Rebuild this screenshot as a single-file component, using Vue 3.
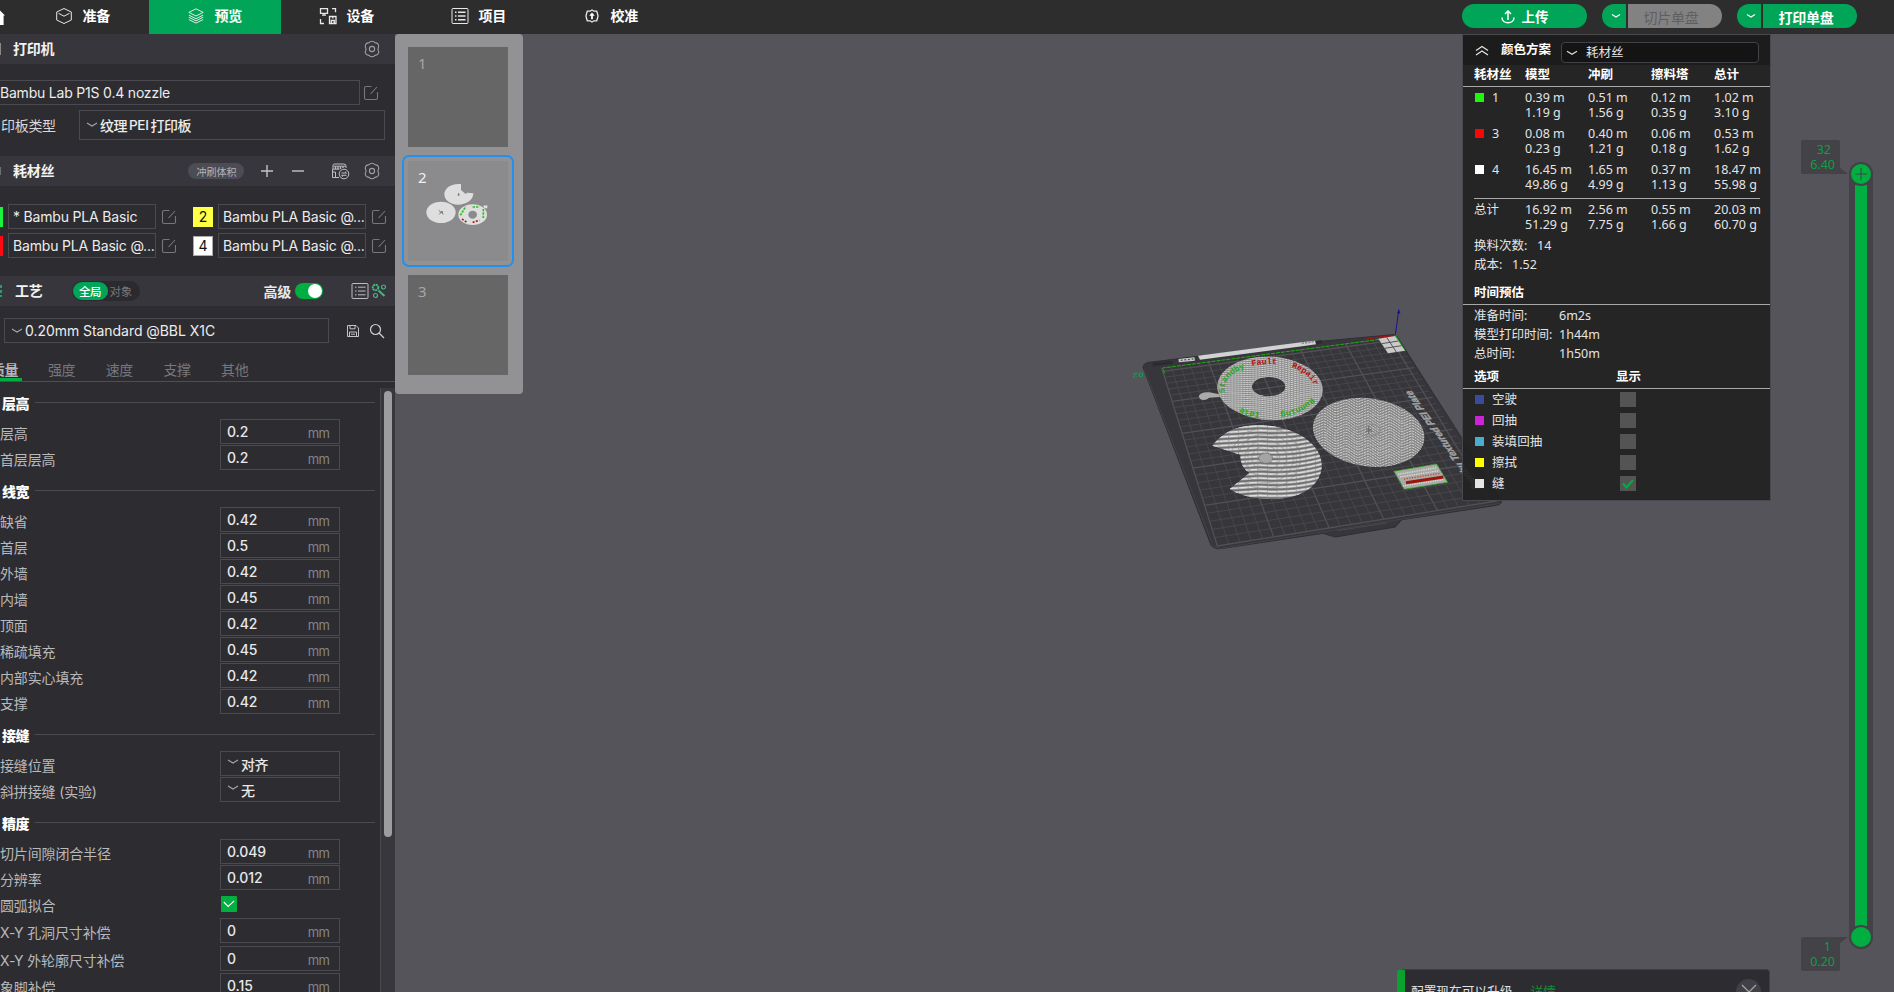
<script setup>
const tabs = [
  { name: '准备', icon: 'cube' },
  { name: '预览', icon: 'layers', active: true },
  { name: '设备', icon: 'device' },
  { name: '项目', icon: 'list' },
  { name: '校准', icon: 'calib' },
]

const filaments = [
  { id: '', name: '* Bambu PLA Basic', cls: 'green' },
  { id: '2', name: 'Bambu PLA Basic @...', cls: 'yellow' },
  { id: '', name: 'Bambu PLA Basic @...', cls: 'red' },
  { id: '4', name: 'Bambu PLA Basic @...', cls: 'white' },
]

const sections = [
  { title: '层高', rows: [
    { label: '层高', value: '0.2' },
    { label: '首层层高', value: '0.2' },
  ] },
  { title: '线宽', rows: [
    { label: '缺省', value: '0.42' },
    { label: '首层', value: '0.5' },
    { label: '外墙', value: '0.42' },
    { label: '内墙', value: '0.45' },
    { label: '顶面', value: '0.42' },
    { label: '稀疏填充', value: '0.45' },
    { label: '内部实心填充', value: '0.42' },
    { label: '支撑', value: '0.42' },
  ] },
  { title: '接缝', rows: [
    { label: '接缝位置', select: '对齐' },
    { label: '斜拼接缝 (实验)', select: '无' },
  ] },
  { title: '精度', rows: [
    { label: '切片间隙闭合半径', value: '0.049' },
    { label: '分辨率', value: '0.012' },
    { label: '圆弧拟合', check: true },
    { label: 'X-Y 孔洞尺寸补偿', value: '0', tall: true },
    { label: 'X-Y 外轮廓尺寸补偿', value: '0', mid: true },
    { label: '象脚补偿', value: '0.15' },
  ] },
]

const usage = [
  { id: '1', cls: 'lime', cells: [['0.39 m', '1.19 g'], ['0.51 m', '1.56 g'], ['0.12 m', '0.35 g'], ['1.02 m', '3.10 g']] },
  { id: '3', cls: 'pure-red', cells: [['0.08 m', '0.23 g'], ['0.40 m', '1.21 g'], ['0.06 m', '0.18 g'], ['0.53 m', '1.62 g']] },
  { id: '4', cls: 'pure-white', cells: [['16.45 m', '49.86 g'], ['1.65 m', '4.99 g'], ['0.37 m', '1.13 g'], ['18.47 m', '55.98 g']] },
]
const total = [['16.92 m', '51.29 g'], ['2.56 m', '7.75 g'], ['0.55 m', '1.66 g'], ['20.03 m', '60.70 g']]
const times = [['准备时间:', '6m2s'], ['模型打印时间:', '1h44m'], ['总时间:', '1h50m']]
const options = [
  { name: '空驶', cls: 'travel' },
  { name: '回抽', cls: 'retract' },
  { name: '装填回抽', cls: 'unretract' },
  { name: '擦拭', cls: 'wipe' },
  { name: '缝', cls: 'seam', on: true },
]

// Perspective mapping of the unit square onto the build plate.
const quad = [[185, 234], [885, 140], [1190, 633], [352, 768]]
function project(u, v) {
  const [[x0, y0], [x1, y1], [x2, y2], [x3, y3]] = quad
  const dx1 = x1 - x2, dx2 = x3 - x2, dx3 = x0 - x1 + x2 - x3
  const dy1 = y1 - y2, dy2 = y3 - y2, dy3 = y0 - y1 + y2 - y3
  const d = dx1 * dy2 - dx2 * dy1
  const g = (dx3 * dy2 - dx2 * dy3) / d
  const h = (dx1 * dy3 - dx3 * dy1) / d
  const w = g * u + h * v + 1
  return [
    ((x1 - x0 + g * x1) * u + (x3 - x0 + h * x3) * v + x0) / w,
    ((y1 - y0 + g * y1) * u + (y3 - y0 + h * y3) * v + y0) / w,
  ]
}
function gridPath(bold) {
  let d = ''
  for (let i = 0; i <= 25; i++) {
    if ((i % 5 === 0) !== bold) continue
    const t = i / 25.6
    d += `M${project(t, 0)}L${project(t, 1)}M${project(0, 1 - t)}L${project(1, 1 - t)}`
  }
  return d
}
const fine = gridPath(false)
const bold = gridPath(true)

// Extrusion lines of the three printed discs.
function waves(x0, x1, y0, y1, step, fn) {
  let d = ''
  for (let y = y0; y < y1; y += step) {
    for (let x = x0; x <= x1; x += 8) d += (x === x0 ? 'M' : 'L') + x + ',' + (y + fn(x)).toFixed(1)
  }
  return d
}
const donutLines = waves(340, 680, 130, 430, 6, x => (x - 500) * 0.12 + Math.sin(x / 45) * 4)
const discLines = waves(630, 990, 250, 640, 8, x => (x - 800) * 0.14 + Math.abs(((x - 640) % 66) - 33) * 0.55)
const biteLines = waves(330, 680, 330, 760, 13, x => (x < 480 ? (x - 480) * -0.06 : (x - 480) * 0.08 - (x - 480) * (x - 480) * 0.0009))
const rings = [26, 52, 78, 104, 130]
</script>

<template>
  <div class="app">
    <header class="topbar">
      <svg class="home" viewBox="0 0 6 18" width="6" height="18"><path d="M0 1.500 5 6.500H3.600V16H0z" fill="#fff" /></svg>
      <nav class="tabs">
        <div v-for="t in tabs" :key="t.name" class="tab" :class="{ active: t.active }">
          <span class="tab-icon">
            <svg v-if="t.icon === 'cube'" width="18" height="18" viewBox="0 0 18 18" class="line"><path d="M9 1.500 16.300 5v8L9 16.500 1.700 13V5zM3.500 6.300 9 9.200l5.500-2.900" /></svg>
            <svg v-else-if="t.icon === 'layers'" width="18" height="18" viewBox="0 0 18 18" class="line"><path d="m9 1.800 7.200 3.600L9 9 1.800 5.400zM1.800 8.100 9 11.700l7.200-3.600M1.800 10.200 9 13.800l7.200-3.600M1.800 12.500 9 16.100l7.200-3.600" /></svg>
            <svg v-else-if="t.icon === 'device'" width="18" height="18" viewBox="0 0 18 18" class="line thick"><path d="M1.500 1.700h7v4.600h-7zM5 6.300v1.800M3 8.100h4M13 1.700h3.500v3.500M1.500 12v4.500H5M10.500 9.500h6.500v7h-6.500zM12.300 16v-2.500h3V16M13.800 9.500v2" /></svg>
            <svg v-else-if="t.icon === 'list'" width="18" height="18" viewBox="0 0 18 18" class="line"><rect x="1" y="1.500" width="16" height="15" rx="1" /><path d="M4 5.200h1.500M7 5.200h7.500M4 9h1.500M7 9h7.500M4 12.800h1.500M7 12.800h7.500" stroke-width="1.400" /></svg>
            <svg v-else width="18" height="18" viewBox="0 0 18 18" class="line thick"><path d="M7 4.200 9 3l2 1.200h2.700l.8 2.500L15 9l-.5 2.300-.8 2.500H11L9 15l-2-1.200H4.300l-.8-2.500L3 9l.5-2.300.8-2.500z" /><path d="m9 5.600 2.800 3.200h-1.900v3.400H8.100V8.800H6.200z" fill="#fff" stroke="none" /></svg>
          </span>
          <span class="tab-name">{{ t.name }}</span>
        </div>
      </nav>
      <div class="actions">
        <div class="btn upload">
          <svg width="14" height="14" viewBox="0 0 14 14"><path d="M7 10V1.500M4 4l3-3 3 3M1 7.500c0 7 12 7 12 0" fill="none" stroke="#fff" stroke-width="1.500" /></svg>
          <span>上传</span>
        </div>
        <div class="split">
          <div class="btn drop"><svg width="10" height="6" viewBox="0 0 10 6"><path d="M1 1.500 5 4l4-2.500" fill="none" stroke="#fff" stroke-width="1.100" /></svg></div>
          <div class="btn main disabled">切片单盘</div>
        </div>
        <div class="split">
          <div class="btn drop"><svg width="10" height="6" viewBox="0 0 10 6"><path d="M1 1.500 5 4l4-2.500" fill="none" stroke="#fff" stroke-width="1.100" /></svg></div>
          <div class="btn main">打印单盘</div>
        </div>
      </div>
    </header>

    <div class="body">
      <aside class="sidebar">
        <div class="bar">
          <i class="sliver"></i>
          <b class="bar-title">打印机</b>
          <svg class="gear" width="18" height="18" viewBox="0 0 18 18"><path d="M6.300 2.600q.8-1.400 2.700-1.400t2.700 1.400l1.300.3q1.600.2 2.300 1.600.9 1.400.1 2.700L15 9l.4 1.800q.8 1.300-.1 2.700-.7 1.400-2.300 1.600l-1.300.3q-.8 1.400-2.700 1.400t-2.700-1.400L5 15.100q-1.600-.2-2.300-1.600-.9-1.400-.1-2.700L3 9l-.4-1.800q-.8-1.300.1-2.700Q3.400 3.100 5 2.900z" /><circle cx="9" cy="9" r="2.600" /></svg>
        </div>
        <div class="printer">
          <div class="printer-row">
            <div class="field printer-name">Bambu Lab P1S 0.4 nozzle</div>
            <svg class="edit" width="16" height="16" viewBox="0 0 16 16"><path d="M8.500 1.500H3a1.500 1.500 0 0 0-1.500 1.500v10A1.500 1.500 0 0 0 3 14.500h10a1.500 1.500 0 0 0 1.500-1.500V7M7.500 9 14 2" /></svg>
          </div>
          <div class="plate-row">
            <span class="plate-label">印板类型</span>
            <div class="field plate-type"><svg class="chev" width="12" height="6" viewBox="0 0 12 6"><path d="m1 1 5 3 5-3" /></svg>纹理<span class="pei">PEI</span>打印板</div>
          </div>
        </div>

        <div class="bar">
          <i class="sliver round"></i>
          <b class="bar-title">耗材丝</b>
          <span class="pill">冲刷体积</span>
          <svg class="plus" width="12" height="12" viewBox="0 0 12 12"><path d="M6 0v12M0 6h12" /></svg>
          <svg class="minus" width="12" height="12" viewBox="0 0 12 12"><path d="M0 6h12" /></svg>
          <svg class="ams" width="19" height="17" viewBox="0 0 19 17"><path d="M2 6V2.500Q2 1 3.500 1h9Q15 1 15 3v2M2.500 3.200h12" /><path d="M4.500 3.500V6M7 3.500V6M9.500 3.500V6M12 3.500V5" stroke-width="1.300" /><path d="M8.500 6.200H1.500v8.300H8M4.500 9v5.500M2 9h2.500" /><circle cx="13" cy="11" r="4.800" /><path d="M10.500 10h5l-1.400-1.300M15.500 12.300h-5l1.400 1.300" /></svg>
          <svg class="gear" width="18" height="18" viewBox="0 0 18 18"><path d="M6.300 2.600q.8-1.400 2.700-1.400t2.700 1.400l1.300.3q1.600.2 2.300 1.600.9 1.400.1 2.700L15 9l.4 1.800q.8 1.300-.1 2.700-.7 1.400-2.300 1.600l-1.300.3q-.8 1.400-2.700 1.400t-2.700-1.400L5 15.100q-1.600-.2-2.300-1.600-.9-1.400-.1-2.700L3 9l-.4-1.800q-.8-1.300.1-2.700Q3.400 3.100 5 2.900z" /><circle cx="9" cy="9" r="2.600" /></svg>
        </div>
        <div class="filaments">
          <div v-for="(f, i) in filaments" :key="i" class="filament">
            <span class="chip" :class="f.cls">{{ f.id }}</span>
            <div class="field filament-name">{{ f.name }}</div>
            <svg class="edit" width="16" height="16" viewBox="0 0 16 16"><path d="M8.500 1.500H3a1.500 1.500 0 0 0-1.500 1.500v10A1.500 1.500 0 0 0 3 14.500h10a1.500 1.500 0 0 0 1.500-1.500V7M7.500 9 14 2" /></svg>
          </div>
        </div>

        <div class="bar process">
          <i class="sliver teal"></i>
          <b class="bar-title">工艺</b>
          <div class="scope"><span class="on">全局</span><span class="off">对象</span></div>
          <b class="adv">高级</b>
          <span class="toggle"><i></i></span>
          <svg class="table" width="18" height="18" viewBox="0 0 18 18"><rect x="1" y="1.500" width="16" height="15" rx="1" /><path d="M4 5.200h1.500M7 5.200h7.500M4 9h1.500M7 9h7.500M4 12.800h1.500M7 12.800h7.500" /></svg>
          <svg class="tools" width="16" height="16" viewBox="0 0 16 16"><circle cx="4.500" cy="4.500" r="2.800" stroke-dasharray="2 .6" stroke-width="2" /><circle cx="12.500" cy="4" r="2" /><circle cx="4.500" cy="12.500" r="2" /><path d="m7.500 7.500 6 5.500" stroke-width="2" /></svg>
        </div>
        <div class="preset-row">
          <div class="field preset"><svg class="chev" width="12" height="6" viewBox="0 0 12 6"><path d="m1 1 5 3 5-3" /></svg>0.20mm Standard @BBL X1C</div>
          <svg class="save" width="14" height="14" viewBox="0 0 14 14"><path d="M1.500 1.500h8.500l2.500 2.500v8.500h-11zM4 1.500v3.300h5V1.500M3.500 12.500V8h7v4.500M5 10.200h4" /></svg>
          <svg class="search" width="16" height="16" viewBox="0 0 16 16"><circle cx="6.500" cy="6.500" r="5" /><path d="m10 10 5 5" /></svg>
        </div>
        <div class="subtabs">
          <b>质量</b><span>强度</span><span>速度</span><span>支撑</span><span>其他</span>
        </div>

        <div class="settings">
          <div class="settings-list">
            <section v-for="s in sections" :key="s.title">
              <div class="sec-title"><b>{{ s.title }}</b><i></i></div>
              <div v-for="r in s.rows" :key="r.label" class="row" :class="{ tall: r.tall, mid: r.mid }">
                <span class="row-label">{{ r.label }}</span>
                <span v-if="r.check" class="checked"><svg width="12" height="8" viewBox="0 0 12 8"><path d="m.8 2 4.400 4.500L11.200.8" /></svg></span>
                <div v-else-if="r.select" class="input select"><svg class="chev" width="12" height="6" viewBox="0 0 12 6"><path d="m1 1 5 3 5-3" /></svg>{{ r.select }}</div>
                <div v-else class="input"><span>{{ r.value }}</span><em>mm</em></div>
              </div>
            </section>
          </div>
          <div class="scroll"><i></i></div>
        </div>
      </aside>

      <main class="viewport">
        <svg class="scene" width="420" height="270" viewBox="0 0 1260 810">
          <defs>
            <clipPath id="c-donut"><path clip-rule="evenodd" d="M352 293a158 95 3 1 0 316 4a158 95 3 1 0-316-4zM456 290a50 29 0 1 0 100 0a50 29 0 1 0-100 0z" /></clipPath>
            <clipPath id="c-disc"><ellipse cx="806" cy="427" rx="168" ry="102" transform="rotate(8 806 427)" /></clipPath>
            <clipPath id="c-bite"><path d="M337 467C378 415 430 404 485 405C600 412 668 470 665 530C660 600 580 632 500 627C450 624 410 612 389 597L448 549Q420 530 421 494z" /></clipPath>
            <path id="ring" d="M375 308A133 73 0 0 1 640 284A133 73 0 0 1 375 308" />
          </defs>
          <path d="M129 232Q130 219 148 217L650 155L880 134Q888 134 892 141L1204 630Q1207 642 1190 646L906 689L886 711L706 741L668 730L362 776Q340 777 333 765z" fill="#37363b" stroke="#2f2e33" stroke-width="3" />
          <path d="M133 238 340 770l22 5L1200 640" fill="none" stroke="#4a4a4e" stroke-width="2" />
          <path d="M712 722 860 699" stroke="#4a4a4e" stroke-width="3" />
          <path :d="fine" class="grid-fine" />
          <path :d="bold" class="grid-bold" />
          <path d="M194 250 188 234 840 148" fill="none" stroke="#1fae12" stroke-width="3" stroke-dasharray="12 3" />
          <path d="m800 146 86-10" stroke="#b00f12" stroke-width="4" />
          <path d="m886 136 29 47" stroke="#12a81d" stroke-width="4" />
          <path d="M886 134 896 64" stroke="#15158c" stroke-width="3" />
          <path d="m891 70 6-14 4 15z" fill="#15158c" />
          <path d="m294 197 316-41 35-4 3 11-36 5-312 41z" fill="#d0d2d3" />
          <path d="m605 160 38-5" stroke="#8d8f91" stroke-width="5" stroke-dasharray="7 3" />
          <path d="m236 212 48-5" stroke="#c9cbcc" stroke-width="10" />
          <path d="m242 211 38-4" stroke="#55555a" stroke-width="4" stroke-dasharray="6 5" />
          <path d="m158 224 60-7M648 158l18-3" stroke="#2c2b30" stroke-width="10" />
          <path d="m835 146 50-8 30 44-51 8z" fill="#c9cac9" />
          <path d="m845 161 50-8M854 175l51-8M860 142l29 44" stroke="#55555a" stroke-width="3" />
          <text class="axis" transform="matrix(-1 .08 0 -.72 131 246)">02</text>
          <text class="plate-text" transform="matrix(-.47 -.665 .9 -.08 1143 598)">Bambu Textured PEI Plate</text>

          <path d="M296 318q8-14 32-11l30 6 2 8-32 2q-14 12-28 4z" fill="#aaaaa9" />
          <g clip-path="url(#c-donut)">
            <rect x="340" y="180" width="340" height="220" fill="#8b8b8b" />
            <path :d="donutLines" class="extrude dots" />
            <path d="M350 335Q430 350 660 385M360 300Q440 315 460 330T560 330L670 300" class="soft" />
            <ellipse cx="508" cy="293" rx="56" ry="34" class="soft" />
          </g>
          <g class="ring-text">
            <text class="g"><textPath href="#ring" startOffset="0%">Standby</textPath></text>
            <text class="r"><textPath href="#ring" startOffset="19%">Fault</textPath></text>
            <text class="r"><textPath href="#ring" startOffset="37%">Repair</textPath></text>
            <text class="g"><textPath href="#ring" startOffset="56%">Running</textPath></text>
            <text class="g"><textPath href="#ring" startOffset="81%">Idle</textPath></text>
          </g>

          <g clip-path="url(#c-disc)">
            <rect x="620" y="310" width="370" height="240" fill="#858585" />
            <path :d="discLines" class="extrude dots" />
            <ellipse v-for="r in rings" :key="r" cx="808" cy="440" :rx="r" :ry="r * 0.5" class="soft" />
            <ellipse cx="808" cy="420" rx="32" ry="18" fill="none" stroke="#8a8a8a" stroke-width="5" stroke-dasharray="5 4" />
            <path d="m798 414 18 12m-20 0 20-10M806 408v24" stroke="#6b6b6b" stroke-width="3" />
          </g>
          <g clip-path="url(#c-bite)">
            <rect x="330" y="400" width="340" height="235" fill="#6f6f6f" />
            <path :d="biteLines" class="extrude mid" />
            <path :d="biteLines" class="extrude bright" />
            <ellipse v-for="r in rings" :key="r" cx="497" cy="505" :rx="r * 0.8" :ry="r * 0.7" class="soft dark" />
            <ellipse cx="497" cy="505" rx="20" ry="15" fill="#a4a4a4" stroke="#6f6f6f" stroke-width="3" stroke-dasharray="4 4" />
          </g>

          <path d="m882 544 128-22 33 55-130 21z" fill="#a9a9a6" stroke="#38a22a" stroke-width="3" stroke-dasharray="9 3" />
          <path d="m894 553 117-20M900 561l117-19M908 588l122-19" stroke="#dadad8" stroke-width="4" stroke-dasharray="4 3" />
          <path d="m912 567 108-17" stroke="#c04a42" stroke-width="4" stroke-dasharray="4 4" />
          <path d="m918 578 112-17" stroke="#9c140a" stroke-width="9" />
        </svg>

        <div class="plates">
          <div class="thumb">1</div>
          <div class="thumb selected">2
            <svg width="62" height="44" viewBox="0 0 186 132">
              <path d="M105 3C70 1 55 18 55 34c0 18 18 32 44 31 24-1 43-15 43-34l-18-2-5 4-14-12z" fill="#dedede" />
              <ellipse cx="45" cy="88" rx="44" ry="32" fill="#dedede" />
              <path fill-rule="evenodd" d="M97 95a43 31 0 1 0 86 0a43 31 0 1 0-86 0zM127 95a13 12 0 1 1 26 0a13 12 0 1 1-26 0z" fill="#dedede" />
              <path d="m172 70 10-1v5h-8" stroke="#dedede" stroke-width="4" fill="none" />
              <path d="M98 30v8m-3-2h6M38 82l14 12m-12 0 8-10 2 8" stroke="#777" stroke-width="3" fill="none" />
              <path d="m103 97 16-26M172 78v28M140 72h20" stroke="#27c41e" stroke-width="5" stroke-dasharray="7 3" />
              <path d="m108 108 15 10M140 118l20-6" stroke="#b01c1c" stroke-width="5" stroke-dasharray="6 4" />
            </svg>
          </div>
          <div class="thumb">3</div>
        </div>

        <section class="legend">
          <div class="legend-head">
            <svg width="14" height="11" viewBox="0 0 14 11"><path d="m1 5.500 6-4 6 4M1 10l6-4 6 4" fill="none" stroke="#e6e6e6" stroke-width="1.200" /></svg>
            <b>颜色方案</b>
            <div class="combo"><svg width="12" height="6" viewBox="0 0 12 6"><path d="m1 1.200 5 3 5-3" fill="none" stroke="#ddd" stroke-width="1.300" /></svg>耗材丝</div>
          </div>
          <div class="cols head"><b>耗材丝</b><b>模型</b><b>冲刷</b><b>擦料塔</b><b>总计</b></div>
          <div v-for="u in usage" :key="u.id" class="cols data">
            <div class="key"><i :class="u.cls"></i>{{ u.id }}</div>
            <div v-for="(c, i) in u.cells" :key="i">{{ c[0] }}<br />{{ c[1] }}</div>
          </div>
          <div class="cols total">
            <div>总计</div>
            <div v-for="(c, i) in total" :key="i">{{ c[0] }}<br />{{ c[1] }}</div>
          </div>
          <div class="stat">换料次数:&nbsp;&nbsp; 14</div>
          <div class="stat">成本:&nbsp;&nbsp; 1.52</div>
          <div class="est-head"><b>时间预估</b></div>
          <div class="times">
            <div v-for="t in times" :key="t[0]"><span>{{ t[0] }}</span><span>{{ t[1] }}</span></div>
          </div>
          <div class="opt-head"><b>选项</b><b>显示</b></div>
          <div class="options">
            <div v-for="o in options" :key="o.name" class="option">
              <i :class="o.cls"></i><span>{{ o.name }}</span>
              <div class="box"><svg v-if="o.on" width="12" height="10" viewBox="0 0 12 10"><path d="m1 4.500 3.500 4L11 1" fill="none" stroke="#00ae42" stroke-width="2" /></svg></div>
            </div>
          </div>
        </section>

        <div class="slider">
          <div class="fill"></div>
          <div class="knob top"><svg width="12" height="12" viewBox="0 0 12 12"><path d="M6 0v12M0 6h12" stroke="#3b4a40" stroke-width="1" /></svg></div>
          <div class="knob bottom"></div>
          <div class="tip tip-top"><span>32</span><span>6.40</span></div>
          <div class="tip tip-bottom"><span>1</span><span>0.20</span></div>
        </div>

        <div class="notice">
          <span>配置现在可以升级</span><a>详情</a>
          <div class="close"><svg width="16" height="16" viewBox="0 0 16 16"><path d="m1 1 14 14M15 1 1 15" stroke="#aaa99f" stroke-width="1.200" /></svg></div>
        </div>
      </main>
    </div>
  </div>
</template>

<style>
body { background: #55545a; overflow: hidden; }
</style>

<style scoped>
* { box-sizing: border-box; }
.app { width: 1894px; height: 992px; overflow: hidden; display: flex; flex-direction: column; color: #e8e8e8; font-family: Inter, "Noto Sans CJK SC", sans-serif; font-size: 14px; }
svg { flex: none; display: block; }
i, em { font-style: normal; }

.topbar { height: 34px; flex: none; background: #2d2d2e; display: flex; color: #fff; }
.home { margin-top: 9px; }
.tabs { display: flex; margin-left: 11px; }
.tab { width: 132px; height: 34px; display: flex; align-items: center; padding-left: 38px; font-weight: 700; padding-bottom: 2px; }
.tab.active { background: #00a557; }
.tab-icon { width: 27.5px; }
.tab-name { letter-spacing: -.3px; line-height: 20px; }
.line { fill: none; stroke: #e8e8e8; stroke-width: 1; }
.line.thick { stroke-width: 1.3; }
.actions { display: flex; margin-left: auto; padding: 4px 37px 0 0; gap: 15px; }
.btn { height: 24px; background: #00a557; display: flex; align-items: center; justify-content: center; font-weight: 500; font-size: 14px; line-height: 20px; }
.upload { width: 125px; border-radius: 12px; gap: 7px; font-weight: 700; font-size: 13.5px; padding-top: 1px; }
.split { display: flex; gap: 2px; }
.drop { width: 24px; border-radius: 12px 0 0 12px; padding-left: 4px; }
.main { width: 94px; border-radius: 0 12px 12px 0; padding: 3px 8px 0 0; font-weight: 700; letter-spacing: -.2px; }
.main.disabled { background: #828283; color: #5f5f60; font-weight: 400; }

.body { display: flex; flex: 1; min-height: 0; }
.sidebar { width: 395px; flex: none; background: #2d2c31; display: flex; flex-direction: column; overflow: hidden; }
.bar { height: 30px; flex: none; background: #37363c; display: flex; align-items: center; padding-right: 14px; }
.bar-title { font-size: 14px; letter-spacing: -.2px; color: #f2f2f2; line-height: 20px; }
.sliver { width: 1px; height: 12px; background: #8a8a80; margin-right: 12px; }
.sliver.round { background: #6e6e72; height: 8px; }
.sliver.teal { width: 2px; background: repeating-linear-gradient(#2b9b68 0 3px, #37363c 3px 5px); margin-right: 13px; }
.gear { fill: none; stroke: #a0a0a4; stroke-width: 1.1; }
.bar > .gear { margin-left: auto; }
.field { border: 1px solid #4b4a51; height: 25px; display: flex; align-items: center; white-space: nowrap; overflow: hidden; color: #ececec; }
.edit { fill: none; stroke: #77777b; stroke-width: 1.1; }
.printer { height: 92px; flex: none; padding-top: 16px; }
.printer-row { display: flex; align-items: center; gap: 3px; }
.printer-name { width: 361px; margin-left: -1px; letter-spacing: -.2px; padding-bottom: 1px; }
.plate-row { display: flex; align-items: center; margin-top: 5px; }
.plate-label { width: 79px; padding: 0 0 1px 1px; letter-spacing: -.3px; color: #d8d8d8; }
.plate-type { width: 306px; height: 30px; padding: 0 0 0 6px; letter-spacing: -.5px; font-weight: 500; }
.pei { font-size: 13.5px; padding: 0 2px; letter-spacing: -.3px; font-weight: 500; }
.chev { fill: none; stroke: #a5a5a8; stroke-width: 1.1; margin-right: 2px; }
.pill { width: 56px; height: 16px; border-radius: 8px; background: #4c4c55; font-size: 10px; color: #b3b3b6; line-height: 18px; text-align: center; margin: 0 17px 0 134px; }
.plus, .minus { stroke: #c4c4c6; stroke-width: 1.4; margin-right: 19px; }
.minus { margin-right: 27px; }
.ams { fill: none; stroke: #c0c0c2; stroke-width: 1; }
.filaments { height: 90px; flex: none; padding-top: 18px; display: grid; grid-template-columns: 193px 202px; grid-auto-rows: 25px; row-gap: 4px; }
.filament { display: flex; align-items: center; }
.chip { width: 20px; height: 20px; margin-right: 5px; color: #111; text-align: center; line-height: 20px; flex: none; }
.filament:nth-child(odd) .chip { width: 3px; }
.chip.green { background: #1af43e; }
.chip.yellow { background: #ffff45; }
.chip.red { background: #fb0a14; }
.chip.white { background: #fff; border: 1px solid #aaa; line-height: 18px; }
.filament-name { width: 148px; padding: 0 0 1px 4px; margin-right: 5px; letter-spacing: -.18px; }
.scope { display: flex; width: 68px; height: 20px; border-radius: 10px; background: #2b2a2f; margin-left: 29px; font-size: 11.500px; line-height: 21px; padding: 1px 0 0 1px; }
.scope .on { width: 35px; height: 18px; border-radius: 9px; background: #00a557; color: #fff; text-align: center; font-weight: 500; letter-spacing: -.3px; }
.scope .off { color: #77777b; padding-left: 2px; letter-spacing: -.4px; }
.adv { margin-left: 124px; letter-spacing: -.3px; }
.toggle { width: 28px; height: 16px; border-radius: 8px; background: #00ae42; margin: 0 28px 0 4px; display: flex; justify-content: flex-end; padding: 1px; }
.toggle i { width: 14px; height: 14px; border-radius: 50%; background: #fff; }
.table { fill: none; stroke: #bdbdc0; stroke-width: 1; margin-right: 2px; }
.tools { fill: none; stroke: #45b581; stroke-width: 1.2; }
.process { padding-right: 0; }
.preset-row { display: flex; align-items: center; height: 49px; padding-left: 4px; flex: none; }
.preset { width: 325px; padding-left: 6px; margin-right: 17px; letter-spacing: -.05px; }
.save { fill: none; stroke: #c4c4c6; stroke-width: 1; margin-right: 9px; }
.search { fill: none; stroke: #d0d0d2; stroke-width: 1.2; }
.subtabs { height: 27px; flex: none; border-bottom: 1px solid #4f4e55; display: flex; color: #77777b; line-height: 30px; letter-spacing: -.4px; }
.subtabs > * { width: 57.7px; flex: none; height: 26px; }
.subtabs b { width: 22px; margin-right: 26px; color: #b5b5b7; border-bottom: 3px solid #00ae42; display: flex; justify-content: flex-end; white-space: nowrap; padding-right: 4px; height: 26px; }

.settings { flex: 1; min-height: 0; display: flex; justify-content: space-between; padding-top: 1px; }
.settings-list { width: 375px; height: 609px; overflow: hidden; }
.sec-title { height: 36px; display: flex; align-items: flex-start; gap: 6px; }
.sec-title b { margin: 11px 0 0 2px; line-height: 20px; color: #fff; font-weight: 900; letter-spacing: -.4px; }
.sec-title i { flex: 1; height: 1px; background: #4c4b52; margin-top: 19px; }
.row { height: 26px; display: flex; align-items: flex-start; }
.row.tall { height: 28px; margin-top: 1px; }
.row.mid { height: 27px; }
.row-label { width: 220px; line-height: 30px; color: #b9b9bb; letter-spacing: -.15px; height: 25px; white-space: nowrap; }
.input { width: 120px; height: 25px; border: 1px solid #4b4a51; padding: 0 10px 0 6px; display: flex; justify-content: space-between; line-height: 24px; font-weight: 500; letter-spacing: -.1px; }
.input em { color: #858589; font-weight: 400; line-height: 27px; font-size: 13px; letter-spacing: -.8px; }
.input.select { justify-content: flex-start; align-items: center; letter-spacing: -.4px; padding-top: 2px; }
.input.select .chev { margin-top: -5px; }
.checked { width: 16px; height: 16px; background: #00ae42; border-radius: 1px; margin: 5px 0 0 1px; display: flex; align-items: center; justify-content: center; }
.checked path { fill: none; stroke: #fff; stroke-width: 1.1; }
.scroll { width: 15px; margin-top: 5px; border-left: 1px solid #4a494e; background: #38373b; padding: 3px 0 0 3px; }
.scroll i { display: block; width: 8px; height: 446px; border-radius: 4px; background: #9d9da0; }

.viewport { flex: 1; position: relative; background: #55545a; overflow: hidden; }
.scene { position: absolute; left: 705px; top: 256px; }
.grid-fine { fill: none; stroke: #4a4a4f; stroke-width: 2.4; }
.grid-bold { fill: none; stroke: #505055; stroke-width: 4; }
.axis { font: 700 30px "Liberation Sans", sans-serif; fill: #119a4e; }
.plate-text { font: 700 36px "Liberation Sans", sans-serif; fill: #a2a3a5; stroke: #a2a3a5; stroke-width: 1.5; }
.extrude { fill: none; stroke: #d2d2d2; stroke-width: 3; }
.extrude.dots { stroke-dasharray: 7 2; }
.extrude.mid { stroke: #a8a8a8; stroke-width: 8; }
.extrude.bright { stroke: #dedede; stroke-width: 4; stroke-dasharray: 26 3; }
.soft { fill: none; stroke: #b4b4b4; stroke-width: 4; opacity: .4; }
.soft.dark { stroke: #7d7d7d; }
.ring-text text { font: 700 25px "Liberation Mono", monospace; }
.ring-text .r { fill: #b30d0d; }
.ring-text .g { fill: #21a915; }

.plates { position: absolute; left: 0; top: 0; width: 128px; height: 360px; background: #929294; border-radius: 4px; padding: 13px 13px 0; display: flex; flex-direction: column; gap: 14px; }
.thumb { height: 100px; background: #666667; color: #a5a5a7; font: 15px/20px "Noto Sans", sans-serif; padding: 6px 0 0 10px; flex: none; width: 100px; }
.thumb.selected { background: #8b8b8d; color: #f0f0f0; outline: 2px solid #2490ee; outline-offset: 4px; border-radius: 1px; }
.thumb svg { margin: -4px 0 0 8px; }

.legend { position: absolute; left: 1068px; top: 1px; width: 307px; height: 465px; background: rgba(33, 33, 33, .91); outline: 1px solid #49484e; font: 12.5px/15px "Noto Sans", "Noto Sans CJK SC", sans-serif; color: #e4e4e4; }
.legend b { color: #fff; }
.legend-head { height: 30px; background: #1c1c1c; display: flex; padding-left: 12px; }
.legend-head > svg { margin: 10px 12px 0 0; }
.legend-head b { margin: 7px 10px 0 0; }
.combo { width: 198px; height: 21px; margin-top: 7px; border: 1px solid #424148; border-radius: 4px; background: #141414; display: flex; align-items: center; gap: 8px; padding-left: 4px; }
.cols { display: grid; grid-template-columns: 51px 63px 63px 63px 60px; padding-left: 11px; white-space: nowrap; }
.cols.head { height: 22px; border-bottom: 1px solid #a8a8a8; padding-top: 2px; margin-bottom: 3px; }
.cols.data { height: 36px; }
.key { display: flex; }
.key i, .option i { width: 9px; height: 9px; margin: 3px 8px 0 1px; flex: none; }
.lime { background: #1ef70c; }
.pure-red { background: #f90505; }
.pure-white { background: #fff; }
.cols.total { margin: 0 10px 0 11px; padding: 3px 0 0; border-top: 1px solid #a8a8a8; height: 38px; }
.stat { height: 19px; line-height: 19px; padding-left: 11px; }
.est-head { height: 31px; padding: 11px 0 0 11px; border-bottom: 1px solid #a8a8a8; margin-bottom: 1px; }
.times { height: 59px; line-height: 19px; padding-left: 11px; }
.times div { display: flex; }
.times span:first-child { width: 85px; }
.opt-head { height: 24px; padding: 4px 0 0 11px; border-bottom: 1px solid #a8a8a8; display: flex; }
.opt-head b:first-child { width: 142px; }
.option { height: 21px; display: flex; padding-left: 11px; align-items: center; }
.option i { margin-top: 0; }
.option span { width: 128px; letter-spacing: .1px; }
.box { width: 16px; height: 15px; background: #545454; display: flex; align-items: center; justify-content: center; }
.travel { background: #3a4a9e; }
.retract { background: #cd22d6; }
.unretract { background: #49adcf; }
.wipe { background: #ffff00; }
.seam { background: #e6e6e6; }

.slider { position: absolute; left: 1454px; top: 128px; width: 24px; height: 787px; border-radius: 12px; background: #434247; }
.fill { margin: 23px 6px 0; height: 741px; background: #00ae42; }
.knob { position: absolute; left: 0; width: 24px; height: 24px; border-radius: 50%; background: #00ae42; border: 2px solid #434247; display: flex; align-items: center; justify-content: center; }
.knob.top { top: 0; }
.knob.bottom { bottom: 0; }
.tip { position: absolute; left: -48px; width: 39px; height: 34px; background: #434247; border-radius: 2px; color: #119d45; font: 12.500px/15px "Noto Sans", sans-serif; padding: 2px 5px 0 0; display: flex; flex-direction: column; align-items: flex-end; }
.tip span:first-child { padding-right: 4px; }
.tip-top { top: -22px; }
.tip-bottom { top: 775px; }
.tip::after { content: ""; position: absolute; left: 38px; width: 9px; height: 7px; background: #434247; }
.tip-top::after { bottom: 0; clip-path: polygon(0 0, 100% 100%, 0 100%); }
.tip-bottom::after { top: 0; clip-path: polygon(0 0, 100% 0, 0 100%); }

.notice { position: absolute; left: 1002px; top: 935px; width: 373px; height: 60px; background: #2d2c31; border: 1px solid #3f3e44; border-left: 8px solid #0aa12f; border-radius: 4px; font: 12.700px/20px "Noto Sans CJK SC", sans-serif; display: flex; padding: 11px 8px 0 6px; color: #e2e2e2; }
.notice a { color: #128c36; margin-left: 18px; }
.close { margin: -2px 0 0 auto; width: 25px; height: 25px; border-radius: 50%; background: #414048; display: flex; align-items: center; justify-content: center; }
</style>
